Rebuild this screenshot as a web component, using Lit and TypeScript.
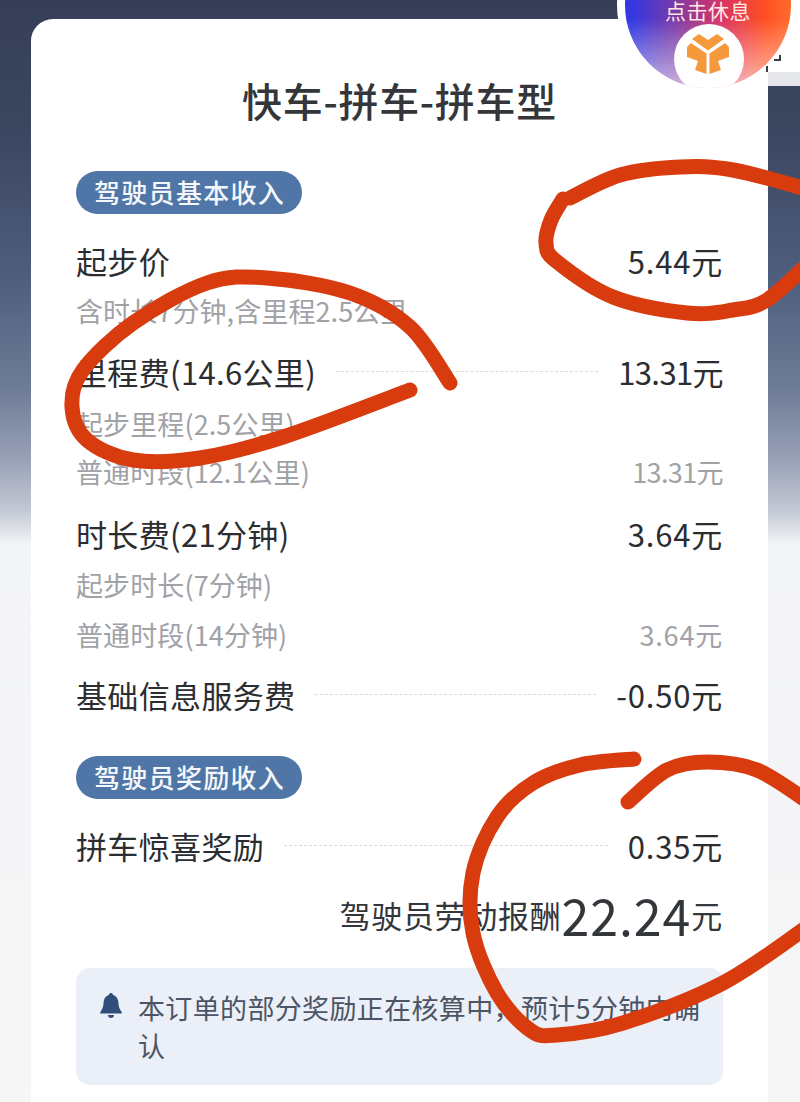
import { LitElement, html, css, svg } from "lit";
import { customElement } from "lit/decorators.js";

type Line = { label: string; amount?: string; sub?: boolean; dash?: boolean; gap?: number; narrow?: boolean };

const basicLines: Line[] = [
  { label: "起步价", amount: "5.44元" },
  { label: "含时长7分钟,含里程2.5公里", sub: true },
  { label: "里程费(14.6公里)", amount: "13.31元", dash: true, gap: 11, narrow: true },
  { label: "起步里程(2.5公里)", sub: true, gap: 2 },
  { label: "普通时段(12.1公里)", amount: "13.31元", sub: true, gap: -2, narrow: true },
  { label: "时长费(21分钟)", amount: "3.64元", gap: 12 },
  { label: "起步时长(7分钟)", sub: true, gap: 1 },
  { label: "普通时段(14分钟)", amount: "3.64元", sub: true },
  { label: "基础信息服务费", amount: "-0.50元", dash: true, gap: 10 },
];

const scribbles: [number, number][][] = [
  [[570, 198], [620, 175], [680, 167], [733, 170], [810, 190]],
  [[563, 199], [551, 220], [546, 243], [556, 261], [613, 297], [687, 313], [733, 310], [767, 300], [810, 262]],
  [[450, 383], [410, 327], [350, 293], [267, 278], [207, 283], [133, 323], [83, 370], [72, 407], [87, 440], [133, 460], [200, 458], [283, 437], [410, 390]],
  [[634, 759], [580, 765], [533, 783], [497, 817], [473, 873], [473, 933], [497, 993], [530, 1030], [557, 1035], [623, 1023], [723, 983], [810, 925]],
  [[628, 802], [667, 770], [707, 762], [757, 770], [810, 803]],
];

// catmull-rom through the points, so the hand drawn circles stay smooth
function smooth(pts: [number, number][]) {
  let d = `M${pts[0][0]} ${pts[0][1]}`;
  for (let i = 0; i < pts.length - 1; i++) {
    const p0 = pts[Math.max(i - 1, 0)];
    const p1 = pts[i];
    const p2 = pts[i + 1];
    const p3 = pts[Math.min(i + 2, pts.length - 1)];
    const c1x = p1[0] + (p2[0] - p0[0]) / 6;
    const c1y = p1[1] + (p2[1] - p0[1]) / 6;
    const c2x = p2[0] - (p3[0] - p1[0]) / 6;
    const c2y = p2[1] - (p3[1] - p1[1]) / 6;
    d += ` C${c1x} ${c1y} ${c2x} ${c2y} ${p2[0]} ${p2[1]}`;
  }
  return d;
}

@customElement("app-root")
export class AppRoot extends LitElement {
  static styles = css`
    :host {
      display: block;
      position: relative;
      width: 800px;
      height: 1102px;
      overflow: hidden;
      font-family: "Noto Sans CJK SC", "Noto Sans", sans-serif;
      background: linear-gradient(
        180deg,
        #373f58 0,
        #3b4660 130px,
        #4f5e7e 280px,
        #6f7c97 390px,
        #98a1b6 460px,
        #c3c8d4 510px,
        #f3f4f6 545px,
        #f6f6f7 100%
      );
    }
    .card {
      margin: 19px 32px 0 31px;
      padding: 51px 45px 80px;
      background: #fff;
      border-radius: 22px 22px 0 0;
    }
    h1 {
      margin: 0;
      height: 60px;
      line-height: 60px;
      text-align: center;
      font-size: 40px;
      font-weight: 500;
      letter-spacing: 0.7px;
      color: #34363a;
    }
    .pill {
      display: inline-block;
      height: 43px;
      line-height: 42px;
      padding: 0 17px 0 18px;
      border-radius: 22px;
      background: #4f76a6;
      color: #f4f7fb;
      font-size: 26px;
      font-weight: 500;
      letter-spacing: 1.3px;
    }
    .first {
      margin-top: 41px;
    }
    .second {
      margin-top: 37px;
    }
    .rows {
      margin-top: 21px;
    }
    .row {
      display: flex;
      align-items: center;
      height: 50px;
      font-size: 31px;
      letter-spacing: 0.35px;
      color: #2b2d31;
      white-space: nowrap;
    }
    .row.sub {
      font-size: 27px;
      letter-spacing: 0.1px;
      color: #a0a2a7;
    }
    .dash {
      flex: 1;
      height: 0;
      margin: 0 20px;
      border-top: 1px dashed #d9dadd;
    }
    .amount {
      margin-left: auto;
      letter-spacing: 0.8px;
    }
    .amount.narrow {
      letter-spacing: -0.6px;
    }
    .total {
      display: flex;
      justify-content: flex-end;
      align-items: center;
      height: 60px;
      margin-top: 14px;
      font-size: 31px;
      letter-spacing: 0.7px;
      color: #33363b;
      white-space: nowrap;
    }
    .total strong {
      font-size: 50px;
      font-weight: 400;
      line-height: 60px;
      letter-spacing: 1px;
    }
    .notice {
      display: flex;
      gap: 16px;
      margin-top: 24px;
      padding: 21px 16px 20px 24px;
      border-radius: 14px;
      background: #ebeff8;
      color: #4b5565;
      font-size: 27px;
      line-height: 38px;
      letter-spacing: 0.35px;
    }
    .notice svg {
      flex: none;
      width: 22px;
      height: 28px;
      margin-top: 3px;
    }
    .corner {
      position: absolute;
      top: 0;
      right: 0;
      width: 40px;
      height: 72px;
      background: #fff;
    }
    .corner::after {
      content: "";
      position: absolute;
      left: 8px;
      right: 0;
      top: 72px;
      height: 14px;
      background: #e5e7eb;
    }
    .badge {
      position: absolute;
      left: 617px;
      top: -86px;
      width: 166px;
      height: 166px;
      border: 8px solid #fff;
      border-radius: 50%;
      overflow: hidden;
      background: linear-gradient(180deg, transparent 58%, rgba(255, 255, 255, 0.62) 100%),
        linear-gradient(90deg, #3238e2 4%, #7a3aa8 30%, #d93366 58%, #ff4f22 84%, #ff6a2c 100%);
    }
    .badge span {
      position: absolute;
      left: 40px;
      top: 78px;
      font-size: 21px;
      line-height: 21px;
      letter-spacing: 0.5px;
      color: #ffe9e2;
      white-space: nowrap;
    }
    .badge i {
      position: absolute;
      left: 49px;
      top: 102px;
      width: 70px;
      height: 70px;
      border-radius: 50%;
      background: #fff;
    }
    .logo {
      position: absolute;
      left: 686px;
      top: 33px;
      width: 44px;
      height: 42px;
    }
    .marks {
      position: absolute;
      left: 760px;
      top: 50px;
      width: 30px;
      height: 24px;
    }
    .ink {
      position: absolute;
      inset: 0;
      width: 800px;
      height: 1102px;
      pointer-events: none;
    }
  `;

  renderLine(l: Line) {
    return html`<div class="row ${l.sub ? "sub" : ""}" style="margin-top:${l.gap ?? 0}px">
      <span>${l.label}</span>
      ${l.dash ? html`<span class="dash"></span>` : ""}
      ${l.amount ? html`<span class="amount ${l.narrow ? "narrow" : ""}">${l.amount}</span>` : ""}
    </div>`;
  }

  render() {
    return html`
      <div class="card">
        <h1>快车-拼车-拼车型</h1>
        <div class="first"><span class="pill">驾驶员基本收入</span></div>
        <div class="rows">${basicLines.map((l) => this.renderLine(l))}</div>
        <div class="second"><span class="pill">驾驶员奖励收入</span></div>
        <div class="rows">
          ${this.renderLine({ label: "拼车惊喜奖励", amount: "0.35元", dash: true })}
        </div>
        <div class="total">驾驶员劳动报酬<strong>22.24</strong>元</div>
        <div class="notice">
          <svg viewBox="0 0 22 28">
            <path
              fill="#2f4f7a"
              d="M11 1c1.300 0 2 .8 2 2 3.600 1 5.200 4 5.400 7.600.2 4 1 6.600 3.300 9.400v1.500H.3V20c2.300-2.800 3.100-5.400 3.300-9.400C3.800 7 5.400 4 9 3c0-1.200.7-2 2-2zM8 23h6c0 1.800-1.200 3-3 3s-3-1.200-3-3z"
            />
          </svg>
          <span>本订单的部分奖励正在核算中，预计5分钟内确认</span>
        </div>
      </div>

      <div class="corner"></div>
      <div class="badge"><span>点击休息</span><i></i></div>
      <svg class="logo" viewBox="0 0 44 42">
        <g fill="#f49a3c">
          <path d="M6 6l7-5 9 6 9-6 7 5-16 11.500z" />
          <path d="M1 14l4-4 15.500 10.500V41L9 37l3-9-11-4z" />
          <path d="M43 14l-4-4-15.500 10.500V41L35 37l-3-9 11-4z" />
        </g>
      </svg>
      <svg class="marks" viewBox="0 0 30 24">
        <path d="M14 10h6V5M7 16v6" fill="none" stroke="#3a3d45" stroke-width="2" />
      </svg>

      <svg class="ink" viewBox="0 0 800 1102">
        ${scribbles.map(
          (pts) => svg`<path d=${smooth(pts)} fill="none" stroke="#d83c0e" stroke-width="15" stroke-linecap="round" stroke-linejoin="round" />`
        )}
      </svg>
    `;
  }
}
